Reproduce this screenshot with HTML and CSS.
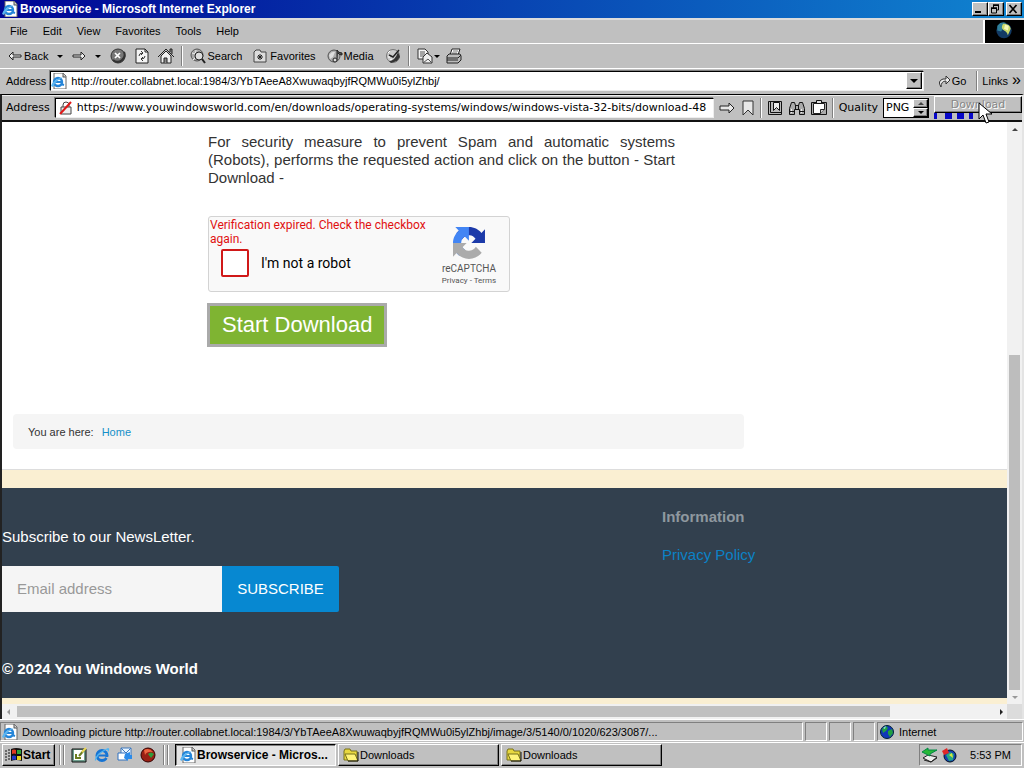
FILE: index.html
```
<!DOCTYPE html>
<html lang="en">
<head>
<meta charset="utf-8">
<title>Browservice - Microsoft Internet Explorer</title>
<link rel="stylesheet" href="styles.css">
</head>
<body>
<svg class="defs" aria-hidden="true">
  <symbol id="ie" viewBox="0 0 16 16">
    <path d="M3 0h9l3 3v13H3z" fill="#fff" stroke="#666" /><path d="M12 0v4h3" fill="#ccc" stroke="#555"/>
    <circle cx="7" cy="9" r="4" fill="none" stroke="#2585d8" stroke-width="2.4"/><path d="M4 9h7M10 11l3 1" stroke="#2585d8" stroke-width="2"/>
    <path d="M0 13Q2 6 13 4Q5 7 2 14z" fill="#5bb5f0"/>
  </symbol>
  <symbol id="e" viewBox="0 0 16 16">
    <circle cx="8" cy="8.500" r="5" fill="none" stroke="#1674d4" stroke-width="3"/><path d="M4 8.500h9" stroke="#1674d4" stroke-width="2"/><path d="M11 10h5l-2 2z" fill="#c0c0c0"/>
    <path d="M1 14Q0 7 14 1Q17 2 13 6Q15 2 12 3Q4 7 2 13z" fill="#4db4f2"/>
  </symbol>
  <symbol id="globe" viewBox="0 0 16 16">
    <circle cx="8" cy="8" r="6.500" fill="#1037b8" stroke="#023" /><path d="M3 5l4-3 2 2-2 3-3 2zM9 7l4-2 1 4-3 4-2-3z" fill="#20a040"/><path d="M4 4l3-2-1 3z" fill="#8fe0e0"/>
  </symbol>
  <symbol id="folder" viewBox="0 0 16 14">
    <path d="M1 3l1-2h5l1 2h6v9H1z" fill="#e8d840" stroke="#77701a"/><path d="M2 6h10l3 7H5z" fill="#fff47a" stroke="#77701a"/><path d="M15 4v9H5" fill="none" stroke="#111"/>
  </symbol>
  <symbol id="larr" viewBox="0 0 14 12"><path d="M1 6l4-4v3h8v2H5v3z" fill="#eee" stroke="#222"/></symbol>
  <symbol id="rarr" viewBox="0 0 14 12"><path d="M13 6L9 2v3H1v2h8v3z" fill="#eee" stroke="#222"/></symbol>
</svg>
<div class="desktop">
  <header class="titlebar">
    <svg class="i16"><use href="#ie"/></svg>
    <h1>Browservice - Microsoft Internet Explorer</h1>
    <div class="winbtns">
      <button class="raised" aria-label="Minimize"><svg viewBox="0 0 12 10"><path d="M2 8h6" stroke="#000" stroke-width="2"/></svg></button>
      <button class="raised" aria-label="Restore"><svg viewBox="0 0 12 10"><path d="M4 1.500h6M4.500 1v3M9.500 1v5H7M2 4.500h6M2.500 4v5h5V4" fill="none" stroke="#000"/><path d="M4 1h6M2 4h6" stroke="#000" stroke-width="1.500"/></svg></button>
      <button class="raised close" aria-label="Close"><svg viewBox="0 0 12 10"><path d="M2.500 1l7 8M9.500 1l-7 8" stroke="#000" stroke-width="1.700"/></svg></button>
    </div>
  </header>
  <div class="menurow">
    <nav class="menu">
      <button>File</button><button>Edit</button><button>View</button><button>Favorites</button><button>Tools</button><button>Help</button>
    </nav>
    <div class="throbber"><svg viewBox="0 0 39 24"><circle cx="19" cy="11" r="8" fill="#123a64"/><path d="M12 6q4-5 9-3l-2 4-3 5-4-1z" fill="#2f7f9a"/><path d="M18 4q7 0 8 5l-3 7q-1-4-4-5-4-2-1-7z" fill="#c8d868"/><path d="M20 5l4 1-1 5-4-2z" fill="#f4f8b8"/></svg></div>
  </div>
  <div class="toolbar">
    <button><svg class="i14"><use href="#larr"/></svg><span class="back">Back</span></button>
    <button class="caret" aria-label="Back history"></button>
    <button aria-label="Forward"><svg class="i14"><use href="#rarr"/></svg></button>
    <button class="caret" aria-label="Forward history"></button>
    <button aria-label="Stop"><svg class="i16" viewBox="0 0 16 16"><circle cx="8" cy="8" r="7" fill="#777" stroke="#333"/><path d="M3 12a7 7 0 0 0 11-8" fill="none" stroke="#333" stroke-width="2"/><path d="M5 5l5 5M10 5l-5 5" stroke="#fff" stroke-width="1.700"/></svg></button>
    <button aria-label="Refresh"><svg class="i14 tall" viewBox="0 0 14 16"><path d="M1 1h9l3 3v11H1z" fill="#f4f4f4" stroke="#222"/><path d="M10 1v3h3" fill="none" stroke="#222"/><path d="M4 8q0-3 4-3M6 3l2 2-2 2M10 8q0 3-4 3M8 9l-2 2 2 2" fill="none" stroke="#333"/></svg></button>
    <button aria-label="Home"><svg class="i16" viewBox="0 0 16 16"><path d="M3 8v7h10V8L8 3z" fill="#eee" stroke="#222"/><path d="M0 9l8-8 8 8" fill="none" stroke="#222"/><path d="M12 4V1h2v5M6 15v-5h3v5" fill="#888" stroke="#222"/></svg></button>
    <i class="sep"></i>
    <button class="lab"><svg class="i16" viewBox="0 0 16 16"><circle cx="7" cy="7" r="6" fill="#aaa" stroke="#555"/><path d="M2 5q4 2 4-3M3 12l3-3" stroke="#eee" fill="none"/><circle cx="9" cy="8" r="4" fill="#ddd" stroke="#222"/><path d="M12 11l3 4" stroke="#222" stroke-width="2"/></svg>Search</button>
    <button class="lab fav"><svg class="i14" viewBox="0 0 14 14"><path d="M1 13V3l2-2h4l1 2h5v10z" fill="#ddd" stroke="#444"/><path d="M7 5v6M4 8h6M5 6l4 4M9 6l-4 4" stroke="#222"/></svg>Favorites</button>
    <button class="lab"><svg class="i16" viewBox="0 0 16 16"><circle cx="7" cy="8" r="6" fill="#aaa" stroke="#555"/><path d="M2 7q3-4 6-3l-2 5-3 2z" fill="#ddd"/><path d="M10 12V2q1 3 5 3v2q-3 0-4-2" fill="#555" stroke="#222"/><ellipse cx="8" cy="12" rx="2" ry="2" fill="#ddd" stroke="#222"/></svg>Media</button>
    <button aria-label="History"><svg class="i16" viewBox="0 0 16 16"><circle cx="8" cy="8" r="6.500" fill="#ccc" stroke="#777"/><path d="M13 4l2 5-3 4-6 2-2-2q6 0 9-9z" fill="#333"/><path d="M4 7l4 2 6-7" fill="none" stroke="#222" stroke-width="1.500"/><path d="M3 5l2-2M3 9h2M5 12l2-1" stroke="#fff"/></svg></button>
    <i class="sep"></i>
    <button class="mail" aria-label="Mail"><svg class="i16" viewBox="0 0 16 16"><path d="M1 1h7l3 3v7H1z" fill="#f4f4f4" stroke="#333"/><path d="M3 4h5M3 6h5M3 8h4" stroke="#555"/><path d="M6 15V9l4-4 5 4v6z" fill="#eee" stroke="#333"/><path d="M6 15l5-4 4 4" fill="none" stroke="#555"/></svg><span class="tri"></span></button>
    <button aria-label="Print"><svg class="i16" viewBox="0 0 16 16"><path d="M4 7l2-6h8l-2 6z" fill="#fff" stroke="#222"/><path d="M7 3h5M6 5h5" stroke="#777"/><path d="M1 8l2-2h11l1 2v4l-3 3H1z" fill="#bbb" stroke="#222"/><path d="M1 10h11l3-3M1 12h11" fill="none" stroke="#222"/></svg></button>
  </div>
  <div class="addrrow">
    <label for="addr">Address</label>
    <div class="field">
      <svg class="i16"><use href="#ie"/></svg>
      <input id="addr" type="text" value="http://router.collabnet.local:1984/3/YbTAeeA8XwuwaqbyjfRQMWu0i5ylZhbj/">
      <button class="raised drop" aria-label="Show addresses"><span class="tri"></span></button>
    </div>
    <button class="go"><svg class="i14" viewBox="0 0 14 14"><path d="M4 13Q0 7 6 5h3V2l4 4-4 4V7Q4 7 4 13z" fill="#eee" stroke="#333"/></svg>Go</button>
    <i class="sep"></i>
    <button class="links">Links <span>»</span></button>
  </div>
  <main class="frame">
    <div class="bsbar">
      <label for="url">Address</label>
      <div class="field">
        <svg class="i14" viewBox="0 0 14 14"><path d="M2 6h10v7H2z" fill="#eee" stroke="#444"/><path d="M4 6V4q0-3 3-3t3 3v2" fill="none" stroke="#444"/><path d="M1 13L12 1" stroke="#e01818" stroke-width="2"/></svg>
        <input id="url" type="text" value="https://www.youwindowsworld.com/en/downloads/operating-systems/windows/windows-vista-32-bits/download-48">
      </div>
      <div class="tools">
        <button aria-label="Go to address"><svg class="i16" viewBox="0 0 16 14"><path d="M15 7l-5-5v3H1v4h9v3z" fill="#e8e8e8" stroke="#222"/></svg></button>
        <button aria-label="Bookmark"><svg class="i14 tall" viewBox="0 0 14 16"><path d="M2 1h10v14l-5-5-5 5z" fill="#e8e8e8" stroke="#333"/></svg></button>
      </div>
      <i class="sep"></i>
      <div class="tools">
        <button aria-label="Bookmarks"><svg class="i16" viewBox="0 0 16 16"><path d="M1.500 1.500h13v13h-13z" fill="#bbb" stroke="#111"/><path d="M3.500 2v10.500H14" fill="none" stroke="#111"/><path d="M6.500 2.500h6v8l-3-3-3 3z" fill="#eee" stroke="#111"/></svg></button>
        <button aria-label="Find"><svg class="i16" viewBox="0 0 16 16"><path d="M.5 14.500V8.500l2-6h3l1 3h3l1-3h3l2 6v6h-5v-5h-5v5z" fill="#aaa" stroke="#111"/><path d="M2.500 9v4M12.500 9v4" stroke="#eee"/><path d="M1 11.500h4M11 11.500h4M6.500 5v4M9.500 5v4" stroke="#111"/></svg></button>
        <button aria-label="Clipboard"><svg class="i16" viewBox="0 0 16 16"><path d="M.5 2.500h15v12H.5z" fill="#aaa" stroke="#111"/><path d="M2.500 3.500h11v6l-4 4h-7z" fill="#fff" stroke="#222"/><path d="M9.500 13.500v-4h4" fill="#ccc" stroke="#222"/><path d="M5.500.5h5v3h-5z" fill="#ddd" stroke="#111"/></svg></button>
      </div>
      <i class="sep"></i>
      <label class="qlabel" for="quality">Quality</label>
      <div class="spin">
        <input id="quality" type="text" value="PNG">
        <div class="spinbtns"><button class="raised" aria-label="Increase" disabled><span class="tri up"></span></button><button class="raised" aria-label="Decrease"><span class="tri"></span></button></div>
      </div>
      <div class="dl">
        <button class="raised" disabled>Download</button>
        <div class="progress"><i></i><i></i><i></i><i></i></div>
        <svg class="cursor" viewBox="0 0 14 22"><path d="M1 1v16l4-4 3 8 3-1-3-8h6z" fill="#fff" stroke="#000"/></svg>
      </div>
    </div>
    <div class="view">
      <div class="page">
        <section class="article">
          <p>For security measure to prevent Spam and automatic systems (Robots), performs the requested action and click on the button - Start Download -</p>
          <div class="captcha">
            <div class="cleft">
              <div class="err">Verification expired. Check the checkbox again.</div>
              <label class="robot"><input type="checkbox">I'm not a robot</label>
            </div>
            <div class="cright">
              <svg viewBox="0 0 64 64"><path d="M64 31.955l-.033-1.37V4.687l-7.160 7.160C50.948 4.674 42.033.093 32.050.093c-10.400 0-19.622 4.960-25.458 12.640l11.736 11.860a15.550 15.550 0 0 1 4.754-5.334c2.050-1.600 4.952-2.906 8.968-2.906.485 0 .86.057 1.135.163 4.976.393 9.288 3.140 11.828 7.124l-8.307 8.307z" fill="#1c3aa9"/><path d="M31.862.094l-1.370.033H4.594l7.160 7.160C4.580 13.147 0 22.060 0 32.046c0 10.400 4.960 19.622 12.640 25.458L24.500 45.768a15.550 15.550 0 0 1-5.334-4.754c-1.600-2.050-2.906-4.952-2.906-8.968 0-.485.057-.86.163-1.135.393-4.976 3.140-9.288 7.124-11.828l8.307 8.307z" fill="#4285f4"/><path d="M0 32.045l.033 1.370v25.898l7.160-7.160c5.860 7.173 14.774 11.754 24.760 11.754 10.400 0 19.622-4.960 25.458-12.640l-11.736-11.860a15.550 15.550 0 0 1-4.754 5.334c-2.050 1.600-4.952 2.906-8.968 2.906-.485 0-.86-.057-1.135-.163-4.976-.393-9.288-3.140-11.828-7.124l8.307-8.307z" fill="#ababab"/></svg>
              <span class="rc">reCAPTCHA</span>
              <span class="terms"><a href="#privacy">Privacy</a> - <a href="#terms">Terms</a></span>
            </div>
          </div>
          <button class="start">Start Download</button>
        </section>
        <nav class="crumbs"><span>You are here:</span><a href="#home">Home</a></nav>
        <footer class="foot">
          <div>
            <label for="email">Subscribe to our NewsLetter.</label>
            <form class="sub"><input id="email" type="email" placeholder="Email address"><button type="button">SUBSCRIBE</button></form>
            <strong class="copy">© 2024 You Windows World</strong>
          </div>
          <div class="info"><h2>Information</h2><a href="#policy">Privacy Policy</a></div>
        </footer>
      </div>
      <div class="vbar"><span class="tri up"></span><div class="vthumb"></div><span class="tri dim"></span></div>
      <div class="hbar"><span class="tri left"></span><div class="hthumb"></div><span class="tri right"></span></div>
      <div class="corner"></div>
    </div>
  </main>
  <footer class="status">
    <div class="pane main"><svg class="i16"><use href="#ie"/></svg>Downloading picture http://router.collabnet.local:1984/3/YbTAeeA8XwuwaqbyjfRQMWu0i5ylZhbj/image/3/5140/0/1020/623/3087/...</div>
    <div class="pane"></div><div class="pane"></div><div class="pane"></div>
    <div class="pane zone"><svg class="i16"><use href="#globe"/></svg>Internet</div>
  </footer>
  <footer class="taskbar">
    <button class="raised startbtn"><svg class="i18" viewBox="0 0 18 16"><path d="M0 4h2M0 7h2M0 10h2M0 13h2M3 3h2M3 6h2M3 9h2M3 12h2" stroke="#111"/><path d="M6 2q5-2 11 0v12q-6-2-11 0z" fill="#111"/><path d="M7 3q2-1 4 0v4q-2-1-4 0z" fill="#e23a20"/><path d="M12 3h4v4h-4z" fill="#2da53a"/><path d="M7 9q2-1 4 0v4q-2-1-4 0z" fill="#2438c8"/><path d="M12 9h4v4h-4z" fill="#e8d220"/></svg>Start</button>
    <i class="sep"></i><i class="sep"></i>
    <div class="quick">
      <button aria-label="Show desktop"><svg class="i16" viewBox="0 0 16 16"><path d="M1 2h14v13H1z" fill="#70a090" stroke="#111"/><path d="M3 3h10v10H3z" fill="#fff"/><path d="M5 7v4h5M8 9l6-7" fill="none" stroke="#6c7d20" stroke-width="2"/><path d="M11 5l4-4" stroke="#ecd858" stroke-width="2"/></svg></button>
      <button aria-label="Internet Explorer"><svg class="i16"><use href="#e"/></svg></button>
      <button aria-label="Outlook Express"><svg class="i16" viewBox="0 0 16 16"><path d="M4 1h10v9H4z" fill="#e8f4ff" stroke="#3f78bd"/><path d="M4 1l5 5 5-5" fill="none" stroke="#3f78bd"/><path d="M1 6h9v7H1z" fill="#fff" stroke="#2f70c0"/><path d="M8 7l5-2v3h2v4h-4v2l-4-3z" fill="#2b8bea"/></svg></button>
      <button aria-label="Channels"><svg class="i16" viewBox="0 0 16 16"><circle cx="8" cy="8" r="7" fill="#992014" stroke="#300"/><path d="M4 3q5-3 9 2-6-1-8 3z" fill="#ee6540"/><path d="M8 7q3-3 6 0l-3 4z" fill="#2f9c3c"/></svg></button>
    </div>
    <i class="sep"></i><i class="sep"></i>
    <div class="tasks">
      <button class="task active"><svg class="i16"><use href="#ie"/></svg>Browservice - Micros...</button>
      <button class="task raised"><svg class="i16"><use href="#folder"/></svg>Downloads</button>
      <button class="task raised"><svg class="i16"><use href="#folder"/></svg>Downloads</button>
    </div>
    <div class="tray">
      <svg class="i16" viewBox="0 0 16 16"><path d="M1 11l5-3 9 2-6 5z" fill="#eee" stroke="#222"/><path d="M2 13l7 2 6-4" fill="none" stroke="#222"/><path d="M0 5l6-4v2h9l-7 4v2z" fill="#28b838" stroke="#084"/></svg>
      <svg class="i16" viewBox="0 0 16 16"><circle cx="9" cy="9" r="6" fill="#1540b0" stroke="#012"/><path d="M5 8l4-3 4 2-1 6-4 1z" fill="#24a884"/><path d="M8 8l3-2 1 5z" fill="#d8e840"/><path d="M1 4l5-3 2 5-5 2z" fill="#e02828"/></svg>
      <time>5:53 PM</time>
    </div>
  </footer>
</div>
</body>
</html>
```
FILE: styles.css
```
* { box-sizing: border-box; }
body { margin: 0; font: 11px/14px "Liberation Sans", Arial, sans-serif; color: #000; background: #c0c0c0; }
button, input { font: inherit; color: inherit; margin: 0; padding: 0; border: 0; background: none; border-radius: 0; }
input { min-width: 0; outline: 0; }
a { text-decoration: none; }
svg { display: block; flex: none; }
.defs { position: absolute; width: 0; height: 0; }
.i14 { width: 14px; height: 14px; }
.i14.tall { height: 16px; }
.i16 { width: 16px; height: 16px; }
.i18 { width: 18px; height: 16px; }
.raised { background: #c0c0c0; border: 1px solid; border-color: #fff #000 #000 #fff; box-shadow: inset -1px -1px #808080; }
.sep { flex: none; width: 2px; height: 20px; border-left: 1px solid #808080; border-right: 1px solid #fff; }
.tri { display: block; width: 0; height: 0; border: 3px solid transparent; border-top-color: #000; border-bottom-width: 0; }
.tri.up { border: 3px solid transparent; border-bottom-color: #444; border-top-width: 0; }
.tri.left { border: 3px solid transparent; border-right-color: #999; border-left-width: 0; }
.tri.right { border: 3px solid transparent; border-left-color: #222; border-right-width: 0; }
.tri.dim { border-top-color: #999; }
.desktop { min-height: 100vh; display: flex; flex-direction: column; }

.titlebar { height: 18px; display: flex; align-items: center; gap: 2px; padding: 0 2px; color: #fff; background: linear-gradient(90deg, #000494, #1084d0); }
.titlebar h1 { flex: 1; margin: 0; font-size: 12px; line-height: 16px; font-weight: bold; }
.winbtns { display: flex; }
.winbtns button { width: 16px; height: 14px; }
.winbtns svg { width: 12px; height: 10px; }
.winbtns .close { margin-left: 2px; }

.menurow { height: 26px; display: flex; border-top: 2px solid #dcdcdc; border-bottom: 1px solid #fff; }
.menu { flex: 1; display: flex; align-items: center; gap: 15px; padding: 0 0 2px 10px; }
.throbber { width: 41px; background: #000; border-left: 2px solid #fff; }
.throbber svg { width: 39px; height: 23px; }

.toolbar { height: 25px; display: flex; align-items: center; gap: 9px; padding-left: 8px; border-bottom: 1px solid #fff; }
.toolbar button { display: flex; align-items: center; gap: 1px; }
.toolbar .back { padding-left: 1px; }
.toolbar .caret { width: 6px; height: 16px; }
.toolbar .caret::before { content: ""; border: 3px solid transparent; border-top-color: #000; border-bottom-width: 0; }
.toolbar .lab { padding-right: 2px; }
.toolbar .fav { gap: 3px; }
.toolbar .sep { margin: 0 -2px; }
.toolbar .mail { margin-right: -3px; }

.addrrow { height: 25px; display: flex; align-items: center; padding: 0 3px 2px 6px; gap: 4px; }
.field { flex: 1; min-width: 0; display: flex; align-items: center; background: #fff; border: 1px solid; border-color: #000 #eee #eee #000; box-shadow: -1px -1px #808080; }
.addrrow .field { height: 20px; padding: 0 1px 0 0; gap: 4px; }
.addrrow input { flex: 1; }
.drop { width: 16px; height: 17px; display: grid; place-items: center; }
.drop .tri { border-width: 4px 4px 0; }
.go { display: flex; align-items: center; gap: 1px; padding: 0 6px 0 9px; }
.links span { font-size: 16px; padding-left: 1px; }

.frame { flex: 1; display: flex; flex-direction: column; border-left: 2px solid #222; border-right: 2px solid #e4e4e4; border-top: 1px solid #000; }
.bsbar { height: 27px; display: flex; align-items: center; padding: 0 0 1px 4px; gap: 5px; border-top: 1px solid #eee; border-bottom: 2px solid #111; font-family: "DejaVu Sans", Verdana, sans-serif; }
.bsbar .field { height: 20px; padding-left: 3px; gap: 4px; }
.bsbar .field input { flex: 1; }
.tools { display: flex; gap: 6px; }
.spin { display: flex; width: 46px; height: 20px; background: #fff; border: 1px solid #000; }
.spin input { width: 29px; padding-left: 2px; }
.spinbtns { display: flex; flex-direction: column; flex: 1; }
.spinbtns button { flex: 1; display: grid; place-items: center; }
.dl { width: 88px; align-self: stretch; display: flex; flex-direction: column; position: relative; }
.dl button { height: 17px; color: #888; text-shadow: 1px 1px #fff; line-height: 14px; }
.progress { display: flex; gap: 5px; height: 6px; }
.progress i { width: 7px; background: #0808c8; }
.progress i:first-child { width: 3px; margin-right: 3px; }
.progress i:last-child { width: 4px; }
.cursor { position: absolute; left: 44px; top: 6px; width: 14px; height: 22px; }

.view { flex: 1; display: grid; grid-template-columns: 1fr 15px; grid-template-rows: 1fr 15px; background: #f1f1f1; }
.page { display: flex; flex-direction: column; background: #faefd2; font-size: 15px; line-height: 18px; overflow: hidden; padding-bottom: 6px; }
.article { background: #fff; padding: 11px 20px 67px 206px; color: #333; }
.article p { margin: 0 0 29px; max-width: 467px; text-align: justify; }
.captcha { width: 302px; height: 76px; display: flex; background: #f9f9f9; border: 1px solid #d3d3d3; border-radius: 3px; font-family: Roboto, sans-serif; }
.cleft { flex: 1; padding: 1px 0 0 1px; }
.err { font-size: 12px; line-height: 14px; color: #e01010; }
.robot { display: flex; align-items: center; gap: 12px; margin: 3px 0 0 11px; font-size: 14px; color: #000; }
.robot input { appearance: none; width: 28px; height: 28px; background: #fff; border: 2px solid #d01818; border-radius: 2px; }
.cright { width: 80px; display: flex; flex-direction: column; align-items: center; padding-top: 10px; color: #555; }
.cright svg { width: 32px; height: 32px; }
.rc { font-size: 10px; line-height: 12px; margin-top: 4px; }
.terms { font-size: 8px; line-height: 12px; }
.terms a { color: #555; }
.start { display: block; height: 44px; margin: 11px 0 0 -1px; padding: 0 12px; border: 3px solid #aaa; background: #7fb432; color: #fff; font-size: 22px; line-height: 36px; }
.crumbs { display: flex; gap: 8px; background: #fff; padding: 1px 20px 19px 11px; border-bottom: 1px solid #ddd; font-size: 11px; line-height: 35px; color: #333; position: relative; z-index: 0; }
.crumbs::before { content: ""; position: absolute; z-index: -1; left: 11px; top: 0; width: 731px; height: 35px; background: #f5f5f5; border-radius: 4px; }
.crumbs span { padding-left: 15px; }
.crumbs a { color: #1590c8; }
.foot { flex: 1; display: grid; grid-template-columns: 660fr 345fr; margin-top: 18px; background: #32404e; color: #fff; padding-top: 20px; padding-bottom: 20px; }
.foot label { display: block; padding-top: 20px; }
.sub { display: flex; height: 46px; margin: 20px 0 48px; }
.sub input { width: 220px; padding: 0 15px; background: #f5f5f5; color: #333; }
.sub input::placeholder { color: #999; opacity: 1; }
.sub button { width: 117px; background: #0788d1; border-radius: 0 2px 2px 0; }
.copy { display: block; }
.info h2 { margin: 0 0 20px; font-size: 15px; line-height: 18px; color: #8f989f; }
.info a { color: #0b82c6; }
.vbar, .hbar { display: flex; align-items: center; background: #f1f1f1; }
.vbar { flex-direction: column; padding: 6px 0 5px; }
.vthumb { width: 11px; flex: 0 1 335px; margin: auto 0 6px; background: #bdbdbd; }
.hbar { padding: 0 4px 0 5px; }
.hthumb { flex: 0 1 873px; height: 11px; margin: 0 auto 0 7px; background: #c0c0c0; }
.corner { background: #dcdcdc; }

.status { height: 24px; display: flex; gap: 2px; padding: 2px 1px 1px 0; border-top: 1px solid #fff; border-bottom: 1px solid #fff; }
.pane { width: 22px; display: flex; align-items: center; gap: 4px; border: 1px solid; border-color: #808080 #fff #fff #808080; padding-left: 1px; white-space: nowrap; overflow: hidden; }
.pane.main { flex: 1; }
.pane.zone { width: 146px; }

.taskbar { height: 27px; display: flex; align-items: center; gap: 2px; padding: 0 2px 3px; }
.startbtn { display: flex; align-items: center; width: 53px; height: 22px; gap: 0; padding-left: 2px; font-size: 12px; font-weight: bold; margin-right: 2px; }
.quick { display: flex; gap: 7px; padding: 0 5px 0 4px; }
.tasks { flex: 1; display: flex; gap: 2px; padding-left: 4px; }
.task { flex: 0 1 161px; min-width: 0; height: 22px; display: flex; align-items: center; gap: 1px; padding-left: 4px; white-space: nowrap; overflow: hidden; }
.task.active { font-size: 12px; font-weight: bold; background: #e4e4e4; border: 1px solid; border-color: #000 #fff #fff #000; box-shadow: inset 1px 1px #808080; }
.tray { display: flex; align-items: center; gap: 3px; height: 22px; padding: 0 10px 0 2px; border: 1px solid; border-color: #808080 #fff #fff #808080; }
.tray time { padding-left: 10px; }
```
